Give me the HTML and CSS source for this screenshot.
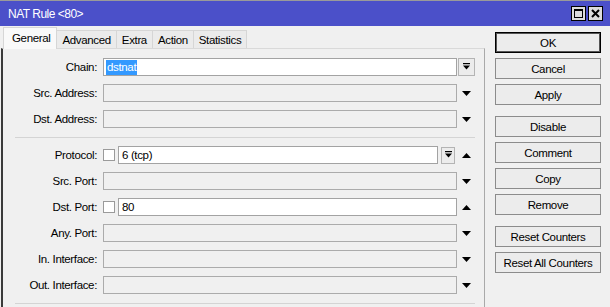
FILE: index.html
```html
<!DOCTYPE html>
<html>
<head>
<meta charset="utf-8">
<title>NAT Rule</title>
<link rel="stylesheet" href="styles.css">
</head>
<body>
<div class="window">
  <div class="titlebar">
    <span class="title">NAT Rule &lt;80&gt;</span>
    <div class="tbtns">
      <span class="tbtn"><svg width="13" height="13" viewBox="0 0 13 13"><rect x="2.5" y="2.5" width="8" height="8" fill="none" stroke="#000" stroke-width="1"/><rect x="2" y="2" width="9" height="2" fill="#000"/></svg></span>
      <span class="tbtn"><svg width="13" height="13" viewBox="0 0 13 13"><path d="M3 3 L10 10 M10 3 L3 10" stroke="#000" stroke-width="2"/></svg></span>
    </div>
  </div>
  <div class="content">
    <div class="main">
      <div class="tabs">
        <div class="tab active">General</div>
        <div class="tab">Advanced</div>
        <div class="tab">Extra</div>
        <div class="tab">Action</div>
        <div class="tab">Statistics</div>
      </div>
      <div class="panel">
        <div class="row">
          <span class="lbl">Chain:</span>
          <div class="ctl">
            <div class="field white"><span class="sel">dstnat</span></div>
          </div>
          <span class="arr"><span class="ddbtn wide"><svg width="9" height="8" viewBox="0 0 9 8"><rect x="1" y="0" width="7" height="1.2" fill="#000"/><polygon points="1,2.5 8,2.5 4.5,6.5" fill="#000"/></svg></span></span>
        </div>
        <div class="row">
          <span class="lbl">Src. Address:</span>
          <div class="ctl"><div class="field"></div></div>
          <span class="arr"><svg class="tri" width="9" height="5" viewBox="0 0 9 5"><polygon points="0,0 9,0 4.5,5" fill="#000"/></svg></span>
        </div>
        <div class="row">
          <span class="lbl">Dst. Address:</span>
          <div class="ctl"><div class="field"></div></div>
          <span class="arr"><svg class="tri" width="9" height="5" viewBox="0 0 9 5"><polygon points="0,0 9,0 4.5,5" fill="#000"/></svg></span>
        </div>
        <div class="sep"></div>
        <div class="row">
          <span class="lbl">Protocol:</span>
          <div class="ctl">
            <span class="chk"></span>
            <div class="field white"><span class="val">6 (tcp)</span></div>
            <span class="ddbtn narrow"><svg width="9" height="8" viewBox="0 0 9 8"><rect x="1" y="0" width="7" height="1.2" fill="#000"/><polygon points="1,2.5 8,2.5 4.5,6.5" fill="#000"/></svg></span>
          </div>
          <span class="arr"><svg class="tri" width="9" height="5" viewBox="0 0 9 5"><polygon points="0,5 9,5 4.5,0" fill="#000"/></svg></span>
        </div>
        <div class="row">
          <span class="lbl">Src. Port:</span>
          <div class="ctl"><div class="field"></div></div>
          <span class="arr"><svg class="tri" width="9" height="5" viewBox="0 0 9 5"><polygon points="0,0 9,0 4.5,5" fill="#000"/></svg></span>
        </div>
        <div class="row">
          <span class="lbl">Dst. Port:</span>
          <div class="ctl">
            <span class="chk"></span>
            <div class="field white"><span class="val">80</span></div>
          </div>
          <span class="arr"><svg class="tri" width="9" height="5" viewBox="0 0 9 5"><polygon points="0,5 9,5 4.5,0" fill="#000"/></svg></span>
        </div>
        <div class="row">
          <span class="lbl">Any. Port:</span>
          <div class="ctl"><div class="field"></div></div>
          <span class="arr"><svg class="tri" width="9" height="5" viewBox="0 0 9 5"><polygon points="0,0 9,0 4.5,5" fill="#000"/></svg></span>
        </div>
        <div class="row">
          <span class="lbl">In. Interface:</span>
          <div class="ctl"><div class="field"></div></div>
          <span class="arr"><svg class="tri" width="9" height="5" viewBox="0 0 9 5"><polygon points="0,0 9,0 4.5,5" fill="#000"/></svg></span>
        </div>
        <div class="row">
          <span class="lbl">Out. Interface:</span>
          <div class="ctl"><div class="field"></div></div>
          <span class="arr"><svg class="tri" width="9" height="5" viewBox="0 0 9 5"><polygon points="0,0 9,0 4.5,5" fill="#000"/></svg></span>
        </div>
        <div class="sep"></div>
      </div>
    </div>
    <div class="side">
      <div class="btn default">OK</div>
      <div class="btn">Cancel</div>
      <div class="btn">Apply</div>
      <div class="btn group">Disable</div>
      <div class="btn">Comment</div>
      <div class="btn">Copy</div>
      <div class="btn">Remove</div>
      <div class="btn group">Reset Counters</div>
      <div class="btn">Reset All Counters</div>
    </div>
  </div>
</div>
</body>
</html>
```
FILE: styles.css
```css
html, body {
  margin: 0;
  padding: 0;
  background: #f0f0f0;
}
body {
  font-family: "Liberation Sans", Arial, sans-serif;
  font-size: 11.5px;
  letter-spacing: -0.35px;
  color: #000;
}
.window {
  width: 610px;
  height: 307px;
  background: #f0f0f0;
  overflow: hidden;
}
.titlebar {
  height: 26px;
  box-sizing: border-box;
  border-top: 1px solid #9a9a9a;
  background: #4b50c9;
  display: flex;
  align-items: center;
  justify-content: space-between;
  padding: 0 7px 0 8px;
}
.title {
  color: #fff;
  font-size: 12px;
  letter-spacing: -0.5px;
}
.tbtns {
  display: flex;
  gap: 2px;
}
.tbtn {
  width: 15px;
  height: 15px;
  box-sizing: border-box;
  border: 1px solid #000;
  background: #dcdcdc;
  display: flex;
  align-items: center;
  justify-content: center;
}
.content {
  display: flex;
}
.main {
  width: 484px;
  margin-left: 1px;
}
.tabs {
  height: 22px;
  display: flex;
  align-items: flex-end;
  padding-left: 2px;
}
.tab {
  height: 18px;
  box-sizing: border-box;
  border: 1px solid #d6d6d6;
  border-bottom: none;
  border-left: none;
  background: #ebebeb;
  padding: 0 5px;
  display: flex;
  align-items: center;
}
.tab.active {
  height: 22px;
  border-left: 1px solid #d6d6d6;
  background: #f9f9f9;
  margin-bottom: -1px;
  position: relative;
  z-index: 1;
  padding: 0 6px 2px 8px;
}
.panel {
  border-top: 1px solid #d9d9d9;
  border-left: 2px solid #3a3a3a;
  border-right: 1px solid #a9a9a9;
  padding-top: 5px;
  height: 270px;
}
.row {
  height: 26px;
  display: grid;
  grid-template-columns: 100px 354px 19px;
  align-items: center;
}
.lbl {
  text-align: right;
  white-space: nowrap;
  padding-right: 6px;
}
.ctl {
  display: flex;
  align-items: center;
  gap: 3px;
  height: 18px;
}
.field {
  flex: 1;
  height: 18px;
  box-sizing: border-box;
  border: 1px solid #ababab;
  background: #f0f0f0;
  display: flex;
  align-items: center;
  padding-left: 2px;
}
.field.white {
  background: #fff;
  border-color: #a3a3a3;
}
.sel {
  background: #3399ff;
  color: #fff;
  padding: 0 1px;
  line-height: 15px;
}
.val {
  padding-left: 1px;
}
.chk {
  width: 12px;
  height: 12px;
  box-sizing: border-box;
  border: 1px solid #9a9a9a;
  background: #fff;
  flex: none;
}
.ddbtn {
  height: 18px;
  box-sizing: border-box;
  border: 1px solid #b4b4b4;
  background: #ececec;
  display: flex;
  align-items: center;
  justify-content: center;
  flex: none;
}
.ddbtn.wide {
  width: 17px;
}
.ddbtn.narrow {
  width: 14px;
  margin-right: 2px;
  height: 17px;
}
.arr {
  display: flex;
  align-items: center;
  justify-content: center;
  height: 18px;
}
.sep {
  height: 10px;
  margin: 0 9px 0 12px;
  box-sizing: border-box;
  border-bottom: 1px solid #d4d4d4;
  transform: translateY(-4px);
}
.side {
  padding: 6px 0 0 10px;
  display: flex;
  flex-direction: column;
  gap: 5px;
}
.btn {
  width: 106px;
  height: 21px;
  box-sizing: border-box;
  border: 1px solid #8c8c8c;
  background: #ececec;
  display: flex;
  align-items: center;
  justify-content: center;
  white-space: nowrap;
}
.btn.default {
  border: 1px solid #000;
  box-shadow: inset 0 0 0 1px #555;
}
.btn.group {
  margin-top: 6px;
}
```
